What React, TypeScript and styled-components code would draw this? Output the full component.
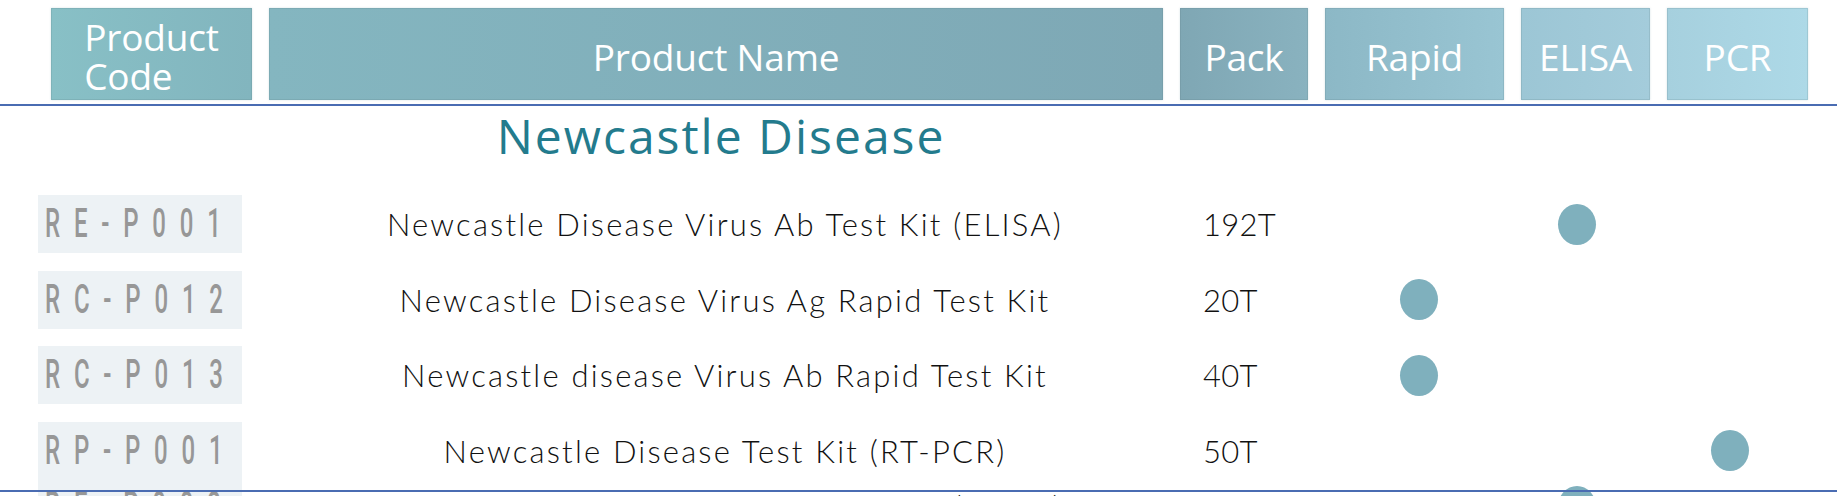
import React from "react";
import styled, { createGlobalStyle } from "styled-components";

const GlobalStyle = createGlobalStyle`
  html, body {
    margin: 0;
    padding: 0;
    background: #ffffff;
  }
  body {
    width: 1837px;
    height: 496px;
    overflow: hidden;
    font-family: "Open Sans", "Noto Sans", sans-serif;
  }
`;

const Page = styled.div`
  width: 1837px;
  display: flex;
  flex-direction: column;
`;

const HeaderRow = styled.div`
  display: flex;
  gap: 17px;
  padding: 8px 0 4px 51px;
`;

const HeaderCell = styled.div<{ $w: number; $from: string; $to: string }>`
  width: ${(p) => p.$w}px;
  height: 92px;
  flex: none;
  display: flex;
  align-items: center;
  justify-content: center;
  background: linear-gradient(90deg, ${(p) => p.$from}, ${(p) => p.$to});
  box-shadow: inset 0 0 0 1px rgba(90, 120, 130, 0.18), 0 0 2px rgba(140, 170, 180, 0.35);
  color: #ffffff;
  font-family: "Open Sans", "Noto Sans", sans-serif;
  font-size: 37px;
  line-height: 39px;
  letter-spacing: -0.2px;
  padding-top: 4px;
  box-sizing: border-box;
`;

const HeaderText = styled.span`
  display: block;
  text-align: left;
`;

const Divider = styled.div`
  height: 2px;
  background: #4a6cb2;
  position: relative;
  z-index: 1;
`;

const BottomDivider = styled(Divider)`
  margin-top: 10px;
`;

const RowGrid = styled.div`
  display: grid;
  grid-template-columns: 204px 958px 130px 178px 138px 168px;
  padding-left: 38px;
  align-items: center;
`;

const TitleRow = styled(RowGrid)`
  height: 60px;
`;

const Title = styled.h2`
  grid-column: 2;
  margin: 0;
  text-align: center;
  font-family: "Open Sans", "Noto Sans", sans-serif;
  font-weight: 400;
  font-size: 48px;
  line-height: 60px;
  letter-spacing: 2px;
  color: #237b8d;
`;

const Rows = styled.div`
  display: flex;
  flex-direction: column;
  gap: 17.5px;
  margin-top: 29px;
`;

const Row = styled(RowGrid)`
  height: 58px;
`;

const NextRow = styled(Row)`
  margin-top: -14px;
`;

const CodeBox = styled.div`
  height: 58px;
  background: #edf2f5;
  display: flex;
  align-items: center;
  padding-left: 7px;
  overflow: hidden;
  box-sizing: border-box;
`;

const CodeText = styled.span`
  display: inline-block;
  font-family: Roboto, "DejaVu Sans", sans-serif;
  font-weight: 500;
  font-size: 40px;
  line-height: 40px;
  letter-spacing: 23px;
  color: #979797;
  transform: scaleX(0.6);
  transform-origin: left center;
  white-space: nowrap;
`;

const NameCell = styled.div`
  padding-left: 8px;
  text-align: center;
  font-family: Lato, "Open Sans", sans-serif;
  font-weight: 300;
  font-size: 31px;
  letter-spacing: 2.2px;
  color: #111111;
  white-space: nowrap;
`;

const PackCell = styled.div`
  padding-left: 3px;
  font-family: Lato, "Open Sans", sans-serif;
  font-weight: 300;
  font-size: 31px;
  letter-spacing: 0.3px;
  color: #111111;
`;

const MarkCell = styled.div`
  display: flex;
  justify-content: center;
  align-items: center;
`;

const Dot = styled.span`
  width: 38px;
  height: 41px;
  border-radius: 50%;
  background: #7fb0bd;
`;

type Method = "rapid" | "elisa" | "pcr";

interface Product {
  code: string;
  name: string;
  pack: string;
  method: Method;
}

const products: Product[] = [
  { code: "RE-P001", name: "Newcastle Disease Virus Ab Test Kit (ELISA)", pack: "192T", method: "elisa" },
  { code: "RC-P012", name: "Newcastle Disease Virus Ag Rapid Test Kit", pack: "20T", method: "rapid" },
  { code: "RC-P013", name: "Newcastle disease Virus Ab Rapid Test Kit", pack: "40T", method: "rapid" },
  { code: "RP-P001", name: "Newcastle Disease Test Kit (RT-PCR)", pack: "50T", method: "pcr" },
];

const nextProduct: Product = {
  code: "RE-P002",
  name: "Newcastle Disease Virus Ab Test Kit (ELISA)",
  pack: "192T",
  method: "elisa",
};

const methods: Method[] = ["rapid", "elisa", "pcr"];

const headers = [
  { key: "code", w: 201, from: "#88c0c6", to: "#82b5be", lines: ["Product", "Code"] },
  { key: "name", w: 894, from: "#84b6c0", to: "#7ea8b5", lines: ["Product Name"] },
  { key: "pack", w: 128, from: "#7fa7b4", to: "#89b2bf", lines: ["Pack"] },
  { key: "rapid", w: 179, from: "#8cb8c6", to: "#99c5d3", lines: ["Rapid"] },
  { key: "elisa", w: 129, from: "#9cc6d5", to: "#a4ccdb", lines: ["ELISA"] },
  { key: "pcr", w: 141, from: "#a6d0de", to: "#add9e7", lines: ["PCR"] },
];

function ProductRow({ p, As = Row }: { p: Product; As?: typeof Row }) {
  return (
    <As>
      <CodeBox>
        <CodeText>{p.code}</CodeText>
      </CodeBox>
      <NameCell>{p.name}</NameCell>
      <PackCell>{p.pack}</PackCell>
      {methods.map((m) => (
        <MarkCell key={m}>{p.method === m ? <Dot /> : null}</MarkCell>
      ))}
    </As>
  );
}

export default function App() {
  return (
    <Page>
      <GlobalStyle />
      <HeaderRow>
        {headers.map((h) => (
          <HeaderCell key={h.key} $w={h.w} $from={h.from} $to={h.to}>
            <HeaderText>
              {h.lines.map((l, i) => (
                <React.Fragment key={l}>
                  {i > 0 && <br />}
                  {l}
                </React.Fragment>
              ))}
            </HeaderText>
          </HeaderCell>
        ))}
      </HeaderRow>
      <Divider />
      <TitleRow>
        <Title>Newcastle Disease</Title>
      </TitleRow>
      <Rows>
        {products.map((p) => (
          <ProductRow key={p.code} p={p} />
        ))}
      </Rows>
      <BottomDivider />
      <ProductRow p={nextProduct} As={NextRow} />
    </Page>
  );
}
